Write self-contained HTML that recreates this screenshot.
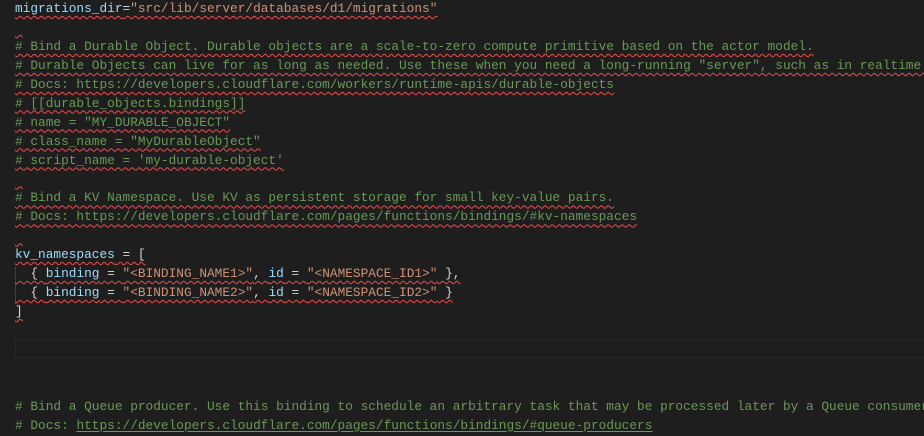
<!DOCTYPE html>
<html><head><meta charset="utf-8"><style>
html,body{margin:0;padding:0;background:#1e1e1e;width:924px;height:436px;overflow:hidden}
.ed{position:absolute;left:15px;top:0px;font-family:"Liberation Mono",monospace;font-size:12.8px;line-height:18.95px;color:#d4d4d4}
.l{height:18.95px;white-space:pre}
.c{color:#6a9955}.s{color:#ce9178}.v{color:#9cdcfe}
.w{text-decoration:underline wavy #f14c4c;text-decoration-thickness:1px;text-underline-offset:3px}
.u{text-decoration:underline;text-underline-offset:2px}
.cur{position:absolute;left:15px;top:339px;width:920px;height:17px;border:1px solid #282828}
.guide{position:absolute;left:15px;top:267px;width:1px;height:38px;background:#404040}
</style></head><body>
<div class="cur"></div>
<div class="guide"></div>
<div class="ed"><div class="l"><span class="w"><span class="v">migrations_dir</span>=<span class="s">"src/lib/server/databases/d1/migrations"</span></span></div><div class="l"><span class="w"> </span></div><div class="l c"><span class="w"># Bind a Durable Object. Durable objects are a scale-to-zero compute primitive based on the actor model.</span></div><div class="l c"><span class="w"># Durable Objects can live for as long as needed. Use these when you need a long-running "server", such as in realtime apps.</span></div><div class="l c"><span class="w"># Docs: https://developers.cloudflare.com/workers/runtime-apis/durable-objects</span></div><div class="l c"><span class="w"># [[durable_objects.bindings]]</span></div><div class="l c"><span class="w"># name = "MY_DURABLE_OBJECT"</span></div><div class="l c"><span class="w"># class_name = "MyDurableObject"</span></div><div class="l c"><span class="w"># script_name = 'my-durable-object'</span></div><div class="l"><span class="w"> </span></div><div class="l c"><span class="w"># Bind a KV Namespace. Use KV as persistent storage for small key-value pairs.</span></div><div class="l c"><span class="w"># Docs: https://developers.cloudflare.com/pages/functions/bindings/#kv-namespaces</span></div><div class="l"><span class="w"> </span></div><div class="l"><span class="w"><span class="v">kv_namespaces</span> = [</span></div><div class="l"><span class="w">  { <span class="v">binding</span> = <span class="s">"&lt;BINDING_NAME1&gt;"</span>, <span class="v">id</span> = <span class="s">"&lt;NAMESPACE_ID1&gt;"</span> },</span></div><div class="l"><span class="w">  { <span class="v">binding</span> = <span class="s">"&lt;BINDING_NAME2&gt;"</span>, <span class="v">id</span> = <span class="s">"&lt;NAMESPACE_ID2&gt;"</span> }</span></div><div class="l"><span class="w">]</span></div><div class="l"></div><div class="l"></div><div class="l"></div><div class="l"></div><div class="l c"># Bind a Queue producer. Use this binding to schedule an arbitrary task that may be processed later by a Queue consumer.</div><div class="l c"># Docs: <span class="u">https://developers.cloudflare.com/pages/functions/bindings/#queue-producers</span></div></div>
</body></html>
